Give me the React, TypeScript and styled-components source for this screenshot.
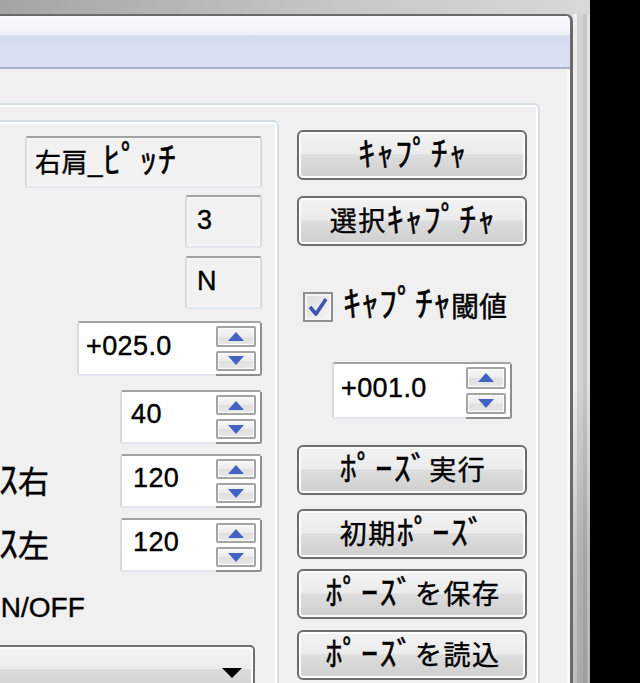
import React from "react";
import styled, { createGlobalStyle } from "styled-components";

const GlobalStyle = createGlobalStyle`
  html, body {
    margin: 0;
    padding: 0;
    width: 640px;
    height: 683px;
    overflow: hidden;
    background: #000;
  }
  * { box-sizing: border-box; }
`;

const FONT = `"Liberation Sans", "Noto Sans CJK JP", sans-serif`;

const Screen = styled.div`
  display: flex;
  width: 640px;
  height: 683px;
  background: #000;
  overflow: hidden;
  font-family: ${FONT};
  color: #000;
  -webkit-text-stroke: 0.4px #000;
`;

const Frame = styled.div`
  width: 590px;
  height: 683px;
  flex-shrink: 0;
  display: flex;
  flex-direction: column;
  padding-top: 14px;
  background: linear-gradient(to right, #a4a4a4, #c8c8c8 60%, #d8d8d8);
`;

const FrameRow = styled.div`
  flex: 1;
  display: flex;
  min-height: 0;
`;

const Window = styled.div`
  flex: 1;
  min-width: 0;
  display: flex;
  flex-direction: column;
  background: #f0f0f0;
  border-top: 2px solid #6a6a6a;
  border-right: 3px solid #6a6a6a;
  border-top-right-radius: 7px;
  overflow: hidden;
  box-shadow: inset -3px 0 0 #fbfbfb;
`;

const Strip = styled.div`
  width: 17px;
  flex-shrink: 0;
  background:
    linear-gradient(to bottom, rgba(0,0,0,0) 0%, rgba(0,0,0,0) 55%, rgba(0,0,0,0.16) 80%, rgba(0,0,0,0.2) 100%),
    linear-gradient(to right, #ededed 0 4px, #d3d3d3 4px 10px, #c6c6c6 10px 14px, #e2e2e2 14px);
`;

const Header = styled.div`
  height: 53px;
  flex-shrink: 0;
  background: linear-gradient(
    to bottom,
    #fafbfd 0px,
    #eff2f8 18px,
    #d5dcef 20px,
    #dbe1f2 53px
  );
  border-bottom: 2px solid #a8b3c8;
`;

const Body = styled.div`
  flex: 1;
  display: flex;
  padding-top: 34px;
  min-height: 0;
`;

const OuterGroup = styled.div`
  flex: 1;
  display: flex;
  gap: 18px;
  margin-left: -40px;
  margin-right: 30px;
  padding-right: 11px;
  border-top: 2px solid #d3dde4;
  border-right: 2px solid #d3dde4;
  border-top-right-radius: 6px;
  box-shadow: inset 0 2px 0 #ffffff, inset -2px 0 0 #ffffff;
`;

const InnerGroup = styled.div`
  flex: 1;
  min-width: 0;
  margin-top: 15px;
  border-top: 2px solid #d3dde4;
  border-right: 2px solid #d3dde4;
  border-top-right-radius: 6px;
  box-shadow: inset 0 2px 0 #ffffff, inset -2px 0 0 #ffffff;
  padding: 14px 15px 0 0;
  display: flex;
  flex-direction: column;
`;

const FieldRow = styled.div<{ $mt: number; $mr?: number }>`
  display: flex;
  align-items: center;
  justify-content: flex-end;
  margin-top: ${(p) => p.$mt}px;
  margin-right: ${(p) => p.$mr ?? 0}px;
`;

const SideLabel = styled.span<{ $indent: number }>`
  margin-left: ${(p) => p.$indent}px;
  margin-right: auto;
  font-size: 31px;
  line-height: 36px;
  white-space: nowrap;
`;

const LatinLabel = styled(SideLabel)`
  font-size: 28px;
`;

const Kana = styled.span<{ $size: number }>`
  font-size: ${(p) => p.$size}px;
  line-height: 1;
`;

const ReadField = styled.div<{ $w: number; $h: number; $jp?: boolean }>`
  width: ${(p) => p.$w}px;
  height: ${(p) => p.$h}px;
  display: flex;
  align-items: center;
  padding-left: ${(p) => (p.$jp ? 8 : 10)}px;
  padding-bottom: 3px;
  background: #f2f2f2;
  border: 2px solid;
  border-color: #a3a3a3 #d9dadd #e2e6ec #d9dadd;
  border-radius: 3px;
  box-shadow: inset 0 0 0 1px #f8f8f8;
  font-size: ${(p) => (p.$jp ? 26 : 27)}px;
  letter-spacing: ${(p) => (p.$jp ? 0.5 : 0)}px;
  white-space: nowrap;
`;

const SpinBox = styled.div<{ $w: number; $h: number }>`
  width: ${(p) => p.$w}px;
  height: ${(p) => p.$h}px;
  display: flex;
  background: #ffffff;
  border: 2px solid;
  border-color: #a3a3a3 #d9dadd #e2e6ec #d9dadd;
  border-radius: 3px;
`;

const SpinValue = styled.div<{ $pad: number }>`
  flex: 1;
  display: flex;
  align-items: center;
  padding-left: ${(p) => p.$pad}px;
  padding-bottom: 5px;
  font-size: 27px;
  letter-spacing: 0.4px;
  white-space: nowrap;
`;

const SpinCol = styled.div`
  width: 46px;
  margin: 0 -2px -2px 0;
  padding: 3px 0;
  display: flex;
  flex-direction: column;
  gap: 4px;
  border-right: 2px solid #8f8f8f;
  border-bottom: 2px solid #8f8f8f;
  border-bottom-right-radius: 3px;
`;

const SpinBtn = styled.div`
  flex: 1;
  width: 40px;
  display: flex;
  align-items: center;
  justify-content: center;
  border: 2px solid #a4a4a4;
  border-radius: 2px;
  background: linear-gradient(to bottom, #f6f6f6 0%, #ececec 50%, #dfdfdf 51%, #e8e8e8 100%);
  box-shadow: inset 0 0 0 1px #fbfbfb;
`;

const Combo = styled.div`
  flex: 1;
  height: 50px;
  display: flex;
  justify-content: flex-end;
  align-items: flex-start;
  padding: 21px 11px 0 0;
  border: 2px solid #707070;
  border-radius: 5px;
  background: linear-gradient(to bottom, #f4f4f4 0%, #ececec 48%, #dcdcdc 49%, #cfcfcf 100%);
  box-shadow: inset 0 0 0 2px #fcfcfc;
`;

const RightCol = styled.div`
  width: 230px;
  flex-shrink: 0;
  display: flex;
  flex-direction: column;
  padding-top: 25px;
`;

const Button = styled.div<{ $mt: number }>`
  height: 50px;
  flex-shrink: 0;
  margin-top: ${(p) => p.$mt}px;
  display: flex;
  align-items: center;
  justify-content: center;
  border: 2px solid #6e6e6e;
  border-radius: 6px;
  background: linear-gradient(to bottom, #f3f3f3 0%, #ebebeb 48%, #dddddd 50%, #cfcfcf 100%);
  box-shadow: inset 0 0 0 2px #fcfcfc;
  font-size: 27px;
  letter-spacing: 1.5px;
  padding-left: 2px;
  padding-bottom: 3px;
  white-space: nowrap;
`;

const CheckRow = styled.label`
  margin-top: 44px;
  height: 34px;
  display: flex;
  align-items: center;
  padding-left: 6px;
  font-size: 28px;
  white-space: nowrap;
`;

const CheckText = styled.span`
  margin-left: 10px;
  padding-bottom: 4px;
`;

const CheckBox = styled.span`
  width: 30px;
  height: 30px;
  flex-shrink: 0;
  display: flex;
  align-items: center;
  justify-content: center;
  border: 2px solid #8e8f8f;
  background: linear-gradient(135deg, #dcdcdc, #f6f6f6);
  box-shadow: inset 0 0 0 2px #f4f4f4;
`;

const RightSpinWrap = styled.div`
  margin-top: 38px;
  margin-left: 35px;
`;

const Up = () => (
  <svg width="16" height="9" viewBox="0 0 16 9">
    <polygon points="8,0 16,9 0,9" fill="#4363c3" />
  </svg>
);
const Down = () => (
  <svg width="16" height="9" viewBox="0 0 16 9">
    <polygon points="0,0 16,0 8,9" fill="#4363c3" />
  </svg>
);

const Spin: React.FC<{ w: number; h: number; value: string; pad: number }> = ({ w, h, value, pad }) => (
  <SpinBox $w={w} $h={h}>
    <SpinValue $pad={pad}>{value}</SpinValue>
    <SpinCol>
      <SpinBtn>
        <Up />
      </SpinBtn>
      <SpinBtn>
        <Down />
      </SpinBtn>
    </SpinCol>
  </SpinBox>
);

const BK = 34;

export default function App() {
  return (
    <Screen>
      <GlobalStyle />
      <Frame>
        <FrameRow>
          <Window>
            <Header />
            <Body>
              <OuterGroup>
                <InnerGroup>
                  <FieldRow $mt={0}>
                    <ReadField $w={237} $h={52} $jp>
                      右肩_<Kana $size={36}>ﾋﾟｯﾁ</Kana>
                    </ReadField>
                  </FieldRow>
                  <FieldRow $mt={7}>
                    <ReadField $w={77} $h={53}>3</ReadField>
                  </FieldRow>
                  <FieldRow $mt={8}>
                    <ReadField $w={77} $h={53}>N</ReadField>
                  </FieldRow>
                  <FieldRow $mt={12}>
                    <Spin w={185} h={55} value="+025.0" pad={7} />
                  </FieldRow>
                  <FieldRow $mt={14}>
                    <Spin w={142} h={54} value="40" pad={9} />
                  </FieldRow>
                  <FieldRow $mt={10}>
                    <SideLabel $indent={39}>
                      <Kana $size={38}>ｽ</Kana>右
                    </SideLabel>
                    <Spin w={142} h={54} value="120" pad={11} />
                  </FieldRow>
                  <FieldRow $mt={10}>
                    <SideLabel $indent={39}>
                      <Kana $size={38}>ｽ</Kana>左
                    </SideLabel>
                    <Spin w={142} h={54} value="120" pad={11} />
                  </FieldRow>
                  <FieldRow $mt={18}>
                    <LatinLabel $indent={19}>ON/OFF</LatinLabel>
                  </FieldRow>
                  <FieldRow $mt={19} $mr={7}>
                    <Combo>
                      <svg width="20" height="10" viewBox="0 0 20 10">
                        <polygon points="0,0 20,0 10,10" fill="#000" />
                      </svg>
                    </Combo>
                  </FieldRow>
                </InnerGroup>
                <RightCol>
                  <Button $mt={0}>
                    <Kana $size={BK}>ｷｬﾌﾟﾁｬ</Kana>
                  </Button>
                  <Button $mt={16}>
                    選択<Kana $size={BK}>ｷｬﾌﾟﾁｬ</Kana>
                  </Button>
                  <CheckRow>
                    <CheckBox>
                      <svg width="22" height="22" viewBox="0 0 22 22">
                        <path d="M3 11 L9 18 L19 3" fill="none" stroke="#3c55b0" strokeWidth="3.6" strokeLinejoin="round" />
                      </svg>
                    </CheckBox>
                    <CheckText>
                      <Kana $size={36}>ｷｬﾌﾟﾁｬ</Kana>閾値
                    </CheckText>
                  </CheckRow>
                  <RightSpinWrap>
                    <Spin w={180} h={57} value="+001.0" pad={7} />
                  </RightSpinWrap>
                  <Button $mt={26}>
                    <Kana $size={BK}>ﾎﾟｰｽﾞ</Kana>実行
                  </Button>
                  <Button $mt={14}>
                    初期<Kana $size={BK}>ﾎﾟｰｽﾞ</Kana>
                  </Button>
                  <Button $mt={10}>
                    <Kana $size={BK}>ﾎﾟｰｽﾞ</Kana>を保存
                  </Button>
                  <Button $mt={11}>
                    <Kana $size={BK}>ﾎﾟｰｽﾞ</Kana>を読込
                  </Button>
                </RightCol>
              </OuterGroup>
            </Body>
          </Window>
          <Strip />
        </FrameRow>
      </Frame>
    </Screen>
  );
}
